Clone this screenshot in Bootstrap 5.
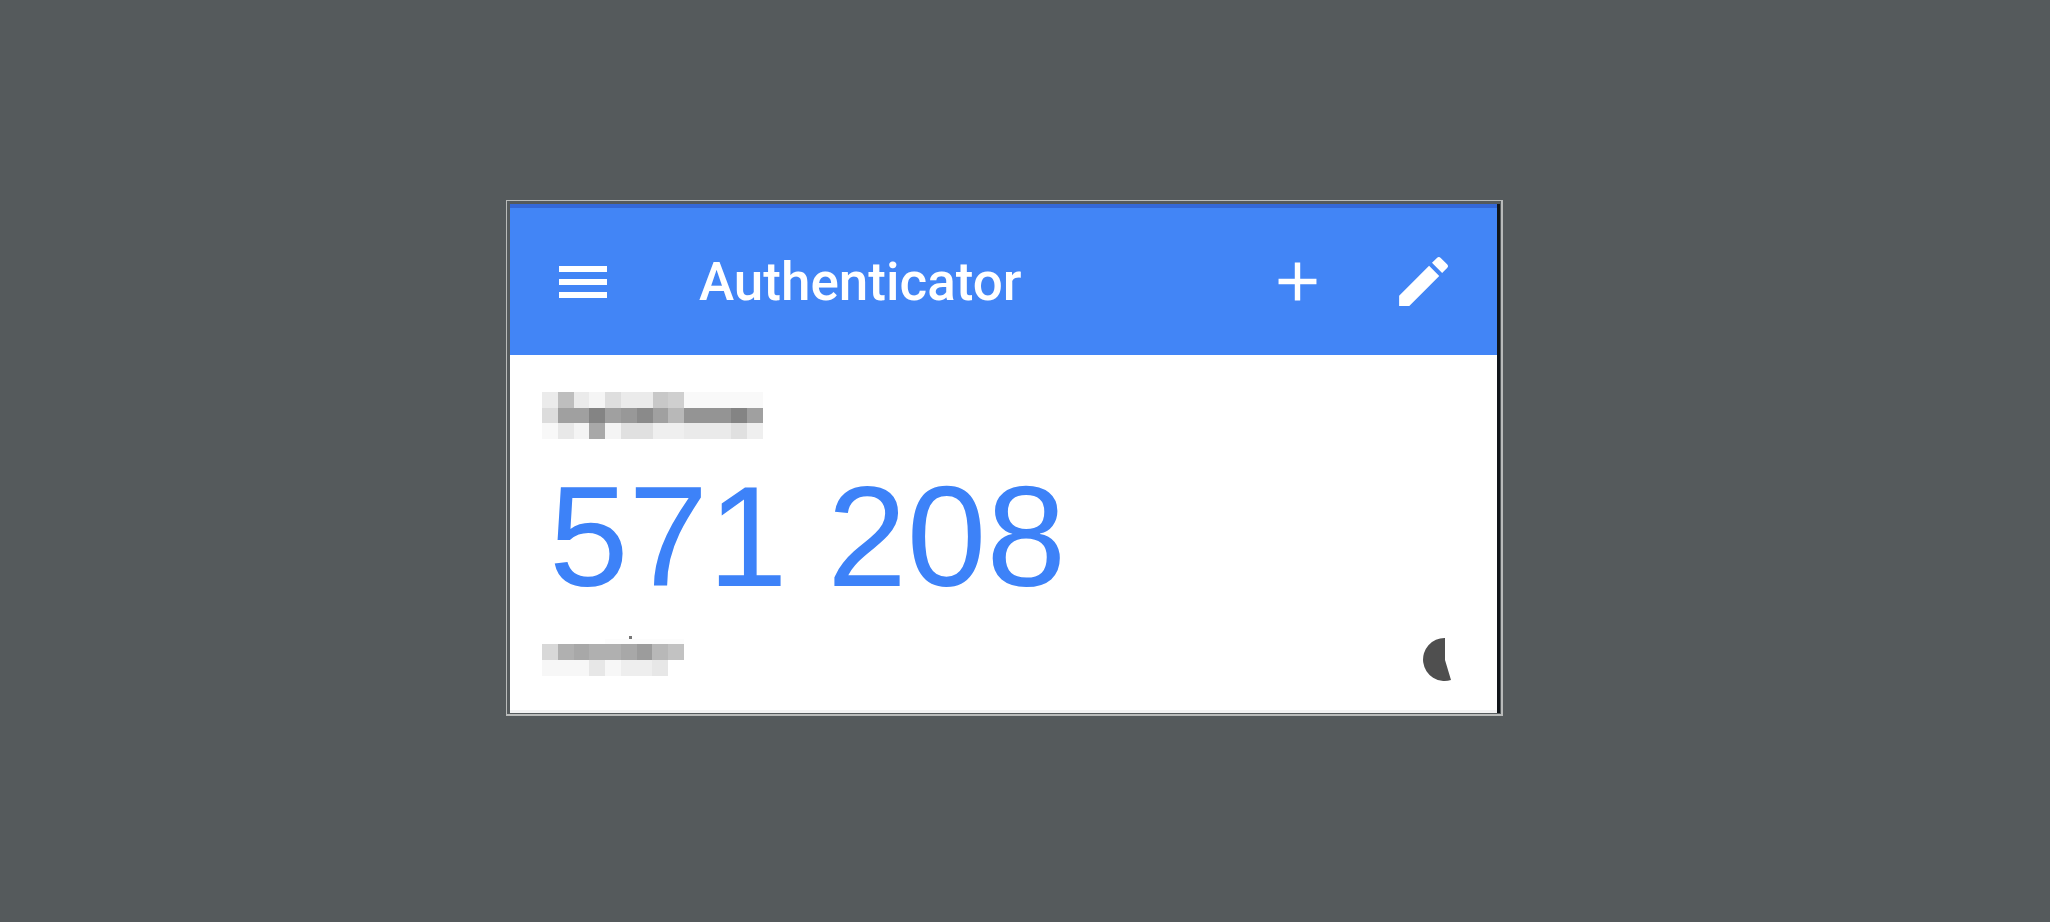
<!DOCTYPE html>
<html lang="en">
<head>
<meta charset="utf-8">
<meta name="viewport" content="width=device-width, initial-scale=1">
<title>Authenticator</title>
<link href="https://cdn.jsdelivr.net/npm/bootstrap@5.3.0/dist/css/bootstrap.min.css" rel="stylesheet">
<style>
  body { background: #555a5c; font-family: Roboto, "Liberation Sans", sans-serif; padding: 200px 41px 0 0; }
  .auth-frame { width: 100%; max-width: 997px; border: solid #b9bbba; border-width: 1px 2px 2px 1px; padding: 3px 1px 1px 3px; }
  .auth-screen { background: #fff; border-right: 3px solid #11151a; }
  .auth-bar { background: #4285f6; border-top: 4px solid #3468d8; height: 151px; padding: 0 41px 0 49px; }
  .auth-bar h1 { font-size: 53px; font-weight: 500; line-height: 64px; margin-left: 92px; }
  .auth-bar .btn { color: #fff; border: 0; border-radius: 0; padding: 0; line-height: 0; }
  .auth-tools { gap: 61px; }
  .auth-entry { padding: 37px 45px 28px 32px; border-bottom: 3px solid #f3f3f3; }
  .auth-code { font: 143px/140px "Liberation Sans", sans-serif; color: #3d82f8; margin: 28px 0 21px 7px; }
</style>
</head>
<body class="d-flex justify-content-center">
<main class="auth-frame">
  <div class="auth-screen">
    <header class="auth-bar d-flex align-items-center text-white">
      <button class="btn" type="button" aria-label="Menu">
        <svg width="48" height="34" viewBox="0 0 48 34" fill="currentColor"><path d="M0 1h48v6H0zM0 14h48v6H0zM0 27h48v6H0z"/></svg>
      </button>
      <h1 class="mb-0">Authenticator</h1>
      <div class="auth-tools d-flex ms-auto">
        <button class="btn" type="button" aria-label="Add account">
          <svg width="65" height="65" viewBox="0 0 24 24" fill="currentColor"><path d="M19 13h-6v6h-2v-6H5v-2h6V5h2v6h6z"/></svg>
        </button>
        <button class="btn" type="button" aria-label="Edit accounts">
          <svg width="65" height="65" viewBox="0 0 24 24" fill="currentColor"><path d="M3 17.25V21h3.75L17.81 9.94l-3.75-3.75L3 17.25zM20.71 7.04a1 1 0 0 0 0-1.41l-2.34-2.34a1 1 0 0 0-1.41 0l-1.83 1.83 3.75 3.75 1.83-1.83z"/></svg>
        </button>
      </div>
    </header>
    <section class="auth-entry">
      <!-- Pixelated issuer name -->
      <svg class="d-block" width="221" height="47" viewBox="0 0 14 3" preserveAspectRatio="none" shape-rendering="crispEdges" aria-hidden="true">
        <path fill="#ebebeb" d="M0 0h1v1H0zM2 0h1v1H2zM5 0h2v1H5z"/>
        <path fill="#bebebe" d="M1 0h1v1H1z"/><path fill="#f5f5f5" d="M3 0h1v1H3z"/><path fill="#dedede" d="M4 0h1v1H4z"/>
        <path fill="#c8c8c8" d="M7 0h1v1H7z"/><path fill="#cfcfcf" d="M8 0h1v1H8z"/><path fill="#f9f9f9" d="M9 0h5v1H9z"/>
        <path fill="#dcdcdc" d="M0 1h1v1H0z"/><path fill="#a0a0a0" d="M1 1h13v1H1z"/><path fill="#848484" d="M3 1h1v1H3zM12 1h1v1h-1z"/>
        <path fill="#989898" d="M5 1h1v1H5z"/><path fill="#8a8a8a" d="M6 1h1v1H6z"/><path fill="#b8b8b8" d="M8 1h1v1H8z"/><path fill="#949494" d="M9 1h3v1H9z"/>
        <path fill="#f8f8f8" d="M0 2h1v1H0z"/><path fill="#e8e8e8" d="M1 2h1v1H1z"/><path fill="#f4f4f4" d="M2 2h1v1H2zM4 2h1v1H4z"/>
        <path fill="#a8a8a8" d="M3 2h1v1H3z"/><path fill="#e0e0e0" d="M5 2h2v1H5zM12 2h1v1h-1z"/><path fill="#efefef" d="M7 2h2v1H7zM13 2h1v1h-1z"/><path fill="#eaeaea" d="M9 2h3v1H9z"/>
      </svg>
      <p class="auth-code">571 208</p>
      <div class="d-flex align-items-start justify-content-between">
        <!-- Pixelated account name -->
        <svg width="142" height="48" viewBox="0 0 9 3" preserveAspectRatio="none" shape-rendering="crispEdges" aria-hidden="true">
          <path fill="#fcfcfc" d="M4 .7h5V1H4z"/><path fill="#777" d="M5.5 .5h.2v.2h-.2z"/>
          <path fill="#d8d8d8" d="M0 1h1v1H0z"/><path fill="#b0b0b0" d="M1 1h4v1H1z"/><path fill="#a8a8a8" d="M2 1h1v1H2zM5 1h1v1H5z"/>
          <path fill="#9c9c9c" d="M6 1h1v1H6z"/><path fill="#b8b8b8" d="M7 1h1v1H7z"/><path fill="#c2c2c2" d="M8 1h1v1H8z"/>
          <path fill="#f7f7f7" d="M0 2h5v1H0z"/><path fill="#e7e7e7" d="M3 2h1v1H3zM7 2h1v1H7z"/><path fill="#eee" d="M5 2h2v1H5z"/>
        </svg>
        <svg width="29" height="54" viewBox="0 -10 29 54" role="img" aria-label="Time remaining"><path fill="#4f4f4f" d="M22 0A21.500 21.500 0 1 0 28 42L22 22z"/></svg>
      </div>
    </section>
  </div>
</main>
<script src="https://cdn.jsdelivr.net/npm/bootstrap@5.3.0/dist/js/bootstrap.bundle.min.js"></script>
</body>
</html>
